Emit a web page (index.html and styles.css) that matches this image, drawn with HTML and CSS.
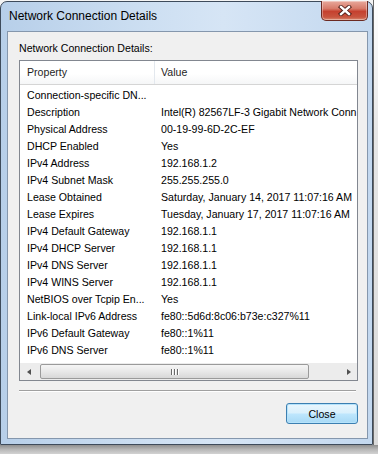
FILE: index.html
```html
<!DOCTYPE html>
<html>
<head>
<meta charset="utf-8">
<link rel="stylesheet" href="styles.css">
</head>
<body>
<div class="desk">
  <div class="win">
    <div class="titlebar">
      <span class="title">Network Connection Details</span>
      <div class="close-x">
        <svg width="14" height="11" viewBox="0 0 14 11">
          <path d="M3 2 L11 9 M11 2 L3 9" stroke="#4a1a14" stroke-width="4.2" stroke-linecap="square"/>
          <path d="M3 2 L11 9 M11 2 L3 9" stroke="#ffffff" stroke-width="2.4" stroke-linecap="square"/>
        </svg>
      </div>
    </div>
    <div class="client">
      <div class="grp-label">Network Connection Details:</div>
      <div class="list">
        <div class="hdr">
          <div class="c1 hc">Property</div>
          <div class="c2 hc">Value</div>
        </div>
        <div class="rows">
          <div class="row"><div class="c1">Connection-specific DN...</div><div class="c2"></div></div>
          <div class="row"><div class="c1">Description</div><div class="c2">Intel(R) 82567LF-3 Gigabit Network Conn</div></div>
          <div class="row"><div class="c1">Physical Address</div><div class="c2">00-19-99-6D-2C-EF</div></div>
          <div class="row"><div class="c1">DHCP Enabled</div><div class="c2">Yes</div></div>
          <div class="row"><div class="c1">IPv4 Address</div><div class="c2">192.168.1.2</div></div>
          <div class="row"><div class="c1">IPv4 Subnet Mask</div><div class="c2">255.255.255.0</div></div>
          <div class="row"><div class="c1">Lease Obtained</div><div class="c2">Saturday, January 14, 2017 11:07:16 AM</div></div>
          <div class="row"><div class="c1">Lease Expires</div><div class="c2">Tuesday, January 17, 2017 11:07:16 AM</div></div>
          <div class="row"><div class="c1">IPv4 Default Gateway</div><div class="c2">192.168.1.1</div></div>
          <div class="row"><div class="c1">IPv4 DHCP Server</div><div class="c2">192.168.1.1</div></div>
          <div class="row"><div class="c1">IPv4 DNS Server</div><div class="c2">192.168.1.1</div></div>
          <div class="row"><div class="c1">IPv4 WINS Server</div><div class="c2">192.168.1.1</div></div>
          <div class="row"><div class="c1">NetBIOS over Tcpip En...</div><div class="c2">Yes</div></div>
          <div class="row"><div class="c1">Link-local IPv6 Address</div><div class="c2">fe80::5d6d:8c06:b73e:c327%11</div></div>
          <div class="row"><div class="c1">IPv6 Default Gateway</div><div class="c2">fe80::1%11</div></div>
          <div class="row"><div class="c1">IPv6 DNS Server</div><div class="c2">fe80::1%11</div></div>
        </div>
        <div class="hscroll">
          <div class="arrow"><span class="tri-l"></span></div>
          <div class="track">
            <div class="thumb"><span class="grip"><i></i><i></i><i></i></span></div>
          </div>
          <div class="arrow"><span class="tri-r"></span></div>
        </div>
      </div>
      <div class="sep"></div>
      <div class="btnrow"><button class="btn">Close</button></div>
    </div>
  </div>
  <div class="side"></div>
</div>
<div class="shadow"></div>
</body>
</html>
```

FILE: styles.css
```css
html, body {
  margin: 0;
  padding: 0;
}
body {
  width: 378px;
  height: 454px;
  overflow: hidden;
  background: #e4e4e4;
  font-family: "Liberation Sans", Arial, sans-serif;
  font-size: 10.6px;
  color: #000;
  display: flex;
  flex-direction: column;
}
.desk {
  display: flex;
  height: 445px;
  background: #f4f4f4;
}
.win {
  margin-top: 1px;
  width: 373px;
  height: 444px;
  box-sizing: border-box;
  border: 1px solid #3e4b5b;
  border-radius: 7px 7px 0 0;
  background: linear-gradient(to right, #b7cfe9 0%, #cddff2 40%, #d6e5f5 60%, #c3d8ef 100%);
  padding: 0 4px 5px 6px;
  display: flex;
  flex-direction: column;
}
.titlebar {
  height: 29px;
  display: flex;
  align-items: flex-start;
  justify-content: space-between;
}
.title {
  font-size: 12px;
  line-height: 15px;
  margin-top: 7px;
  padding-left: 2px;
  color: #000;
}
.close-x {
  margin-top: -1px;
  width: 47px;
  height: 20px;
  box-sizing: border-box;
  border: 1px solid #6b2a22;
  border-top: none;
  border-radius: 0 0 5px 5px;
  background: linear-gradient(#e8a99c 0%, #d77a69 40%, #c5412f 55%, #c8553f 85%, #d98a72 100%);
  display: flex;
  align-items: center;
  justify-content: center;
  box-shadow: inset 0 0 0 1px rgba(255,255,255,0.35);
}
.close-x svg {
  display: block;
}
.client {
  flex: 1;
  border: 1px solid #8597ad;
  background: #f0f0f0;
  display: flex;
  flex-direction: column;
}
.grp-label {
  line-height: 13px;
  padding: 10px 0 0 11px;
}
.list {
  margin: 5px 0 0 11px;
  width: 339px;
  height: 321px;
  box-sizing: border-box;
  border: 1px solid #828790;
  background: #fff;
  display: flex;
  flex-direction: column;
  overflow: hidden;
}
.hdr {
  height: 23px;
  flex: none;
  display: flex;
  border-bottom: 1px solid #d5d5d5;
  background: linear-gradient(#ffffff 0%, #ffffff 55%, #f5f6f7 100%);
}
.hc {
  line-height: 23px;
  color: #1e1e1e;
}
.hdr .c1 {
  border-right: 1px solid #e3e8ee;
}
.c1 {
  width: 127px;
  flex: none;
  padding-left: 7px;
  white-space: nowrap;
  overflow: hidden;
}
.c2 {
  padding-left: 6px;
  white-space: nowrap;
}
.rows {
  flex: 1;
  padding-top: 2px;
}
.row {
  display: flex;
  height: 17px;
  line-height: 17px;
}
.row .c1 {
  width: 128px;
}
.hscroll {
  height: 17px;
  flex: none;
  display: flex;
  background: #ececec;
}
.arrow {
  width: 17px;
  flex: none;
  display: flex;
  align-items: center;
  justify-content: center;
}
.tri-l {
  width: 0;
  height: 0;
  border-top: 3.5px solid transparent;
  border-bottom: 3.5px solid transparent;
  border-right: 4px solid #505050;
}
.tri-r {
  width: 0;
  height: 0;
  border-top: 3.5px solid transparent;
  border-bottom: 3.5px solid transparent;
  border-left: 4px solid #505050;
}
.track {
  flex: 1;
  display: flex;
  align-items: center;
  padding-left: 3px;
}
.thumb {
  width: 269px;
  height: 15px;
  box-sizing: border-box;
  border: 1px solid #9a9a9a;
  border-radius: 2px;
  background: linear-gradient(#f5f5f5 0%, #e8e8e8 50%, #d8d8d8 100%);
  display: flex;
  align-items: center;
  justify-content: center;
}
.grip {
  display: flex;
  gap: 2px;
}
.grip i {
  display: block;
  width: 1px;
  height: 6px;
  background: #6a6a6a;
  box-shadow: 1px 0 0 #fff;
}
.sep {
  margin: 9px 0 0 11px;
  width: 337px;
  height: 1px;
  background: #a0a0a0;
  border-bottom: 1px solid #ffffff;
}
.btnrow {
  display: flex;
  justify-content: flex-end;
  width: 350px;
  margin-top: 11px;
}
.btn {
  width: 72px;
  height: 21px;
  margin: 0;
  padding: 0;
  font-family: "Liberation Sans", Arial, sans-serif;
  font-size: 10.6px;
  color: #000;
  border: 1px solid #3c7fb1;
  border-radius: 3px;
  background: linear-gradient(#eaf6fd 0%, #d9f0fc 48%, #bee6fd 52%, #a7d9f5 100%);
  box-shadow: inset 0 0 0 1px #b6e3fb;
}
.side {
  flex: 1;
  background: linear-gradient(#ffffff 0%, #e6e6e6 30%, #dadada 100%);
  border-left: 1px solid #6a6a6a;
}
.shadow {
  flex: 1;
  background: linear-gradient(#8f8f8f 0%, #b8b8b8 50%, #d2d2d2 100%);
}
```
